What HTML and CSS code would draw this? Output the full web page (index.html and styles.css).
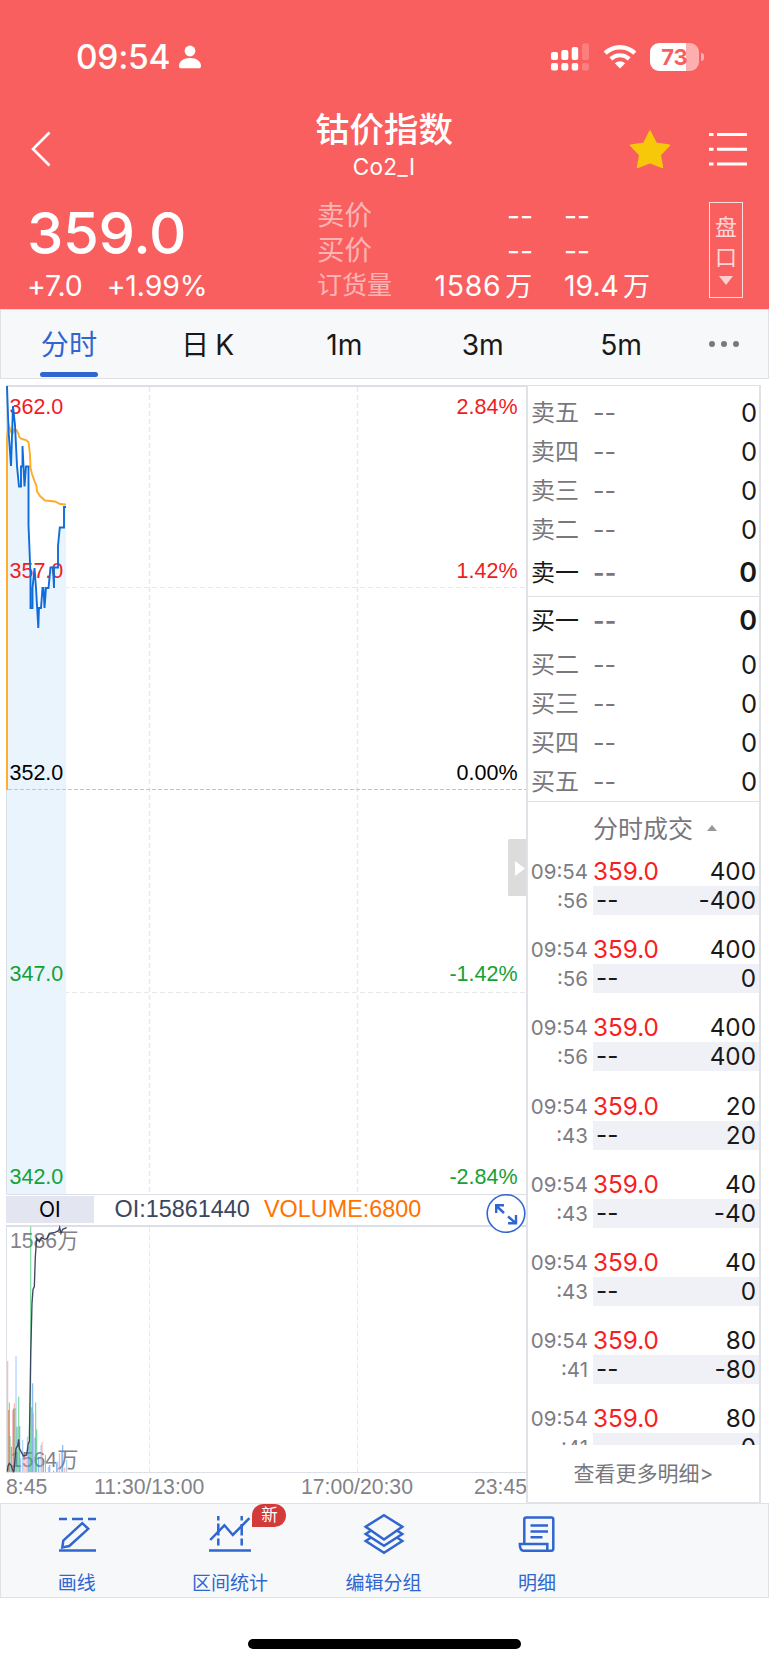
FILE: index.html
```html
<!DOCTYPE html>
<html lang="zh-CN">
<head>
  <meta charset="UTF-8">
  <meta name="viewport" content="width=device-width, initial-scale=1.0">
  <title>钴价指数 Co2_I</title>
  <link rel="stylesheet" href="styles.css">
</head>
<body>
  <header class="header">
    <div class="status-bar">
      <span class="time">09:54</span>
      <svg class="person" width="22" height="24" viewBox="0 0 22 24" fill="#fff">
        <circle cx="11" cy="6" r="5.4"/>
        <path d="M0 21c0-4.500 4.500-8 11-8s11 3.500 11 8c0 1.600-.8 2.300-2.200 2.300H2.200C.8 23.300 0 22.600 0 21z"/>
      </svg>
      <svg class="signal" width="38" height="28" viewBox="0 0 38 28" fill="#fff">
        <rect x="0" y="9" width="7" height="8" rx="2"/>
        <rect x="10.300" y="7" width="7" height="10" rx="2"/>
        <rect x="20.700" y="4" width="6.500" height="13" rx="2"/>
        <rect x="31" y="0.500" width="7" height="16.500" rx="2" opacity=".2"/>
        <rect x="0" y="20" width="7" height="7.500" rx="2"/>
        <rect x="10.300" y="20" width="7" height="7.500" rx="2"/>
        <rect x="20.700" y="20" width="6.500" height="7.500" rx="2"/>
        <rect x="31" y="20" width="7" height="7.500" rx="2" opacity=".2"/>
      </svg>
      <svg class="wifi" width="34" height="26" viewBox="0 0 34 26">
        <path d="M2.200 9.200C10.500 1.200 23.500 1.200 31.800 9.200" fill="none" stroke="#fff" stroke-width="4.400"/>
        <path d="M7.800 14.900C13 10 21 10 26.200 14.900" fill="none" stroke="#fff" stroke-width="4.200"/>
        <path d="M11.800 19.300C14.800 16.600 19.200 16.600 22.200 19.300L17 24.500z" fill="#fff"/>
      </svg>
      <div class="battery"><span>73</span></div>
    </div>

    <div class="nav">
      <svg class="back" width="20" height="36" viewBox="0 0 20 36">
        <path d="M18.500 1.500L2 18l16.500 16.500" fill="none" stroke="#fff" stroke-width="2.600"/>
      </svg>
      <div class="title">
        <h1>钴价指数</h1>
        <p>Co2_I</p>
      </div>
      <svg class="star" width="42" height="40" viewBox="0 0 42 40">
        <path d="M21 2l6.200 12.300 13.300 2-9.300 9.700 2.300 12.500L21 33.500 8.500 38.500 10.800 26 1.500 16.300l13.300-2z" fill="#f7c80a" stroke="#f7c80a" stroke-width="1.500" stroke-linejoin="round"/>
      </svg>
      <svg class="menu" width="38" height="34" viewBox="0 0 38 34" stroke="#fff" stroke-width="3">
        <path d="M0 2.500h4.500M8 2.500h30M0 17.200h4.500M8 17.200h30M0 31.900h4.500M8 31.900h30"/>
      </svg>
    </div>

    <div class="quote">
      <div class="last">
        <div class="price">359.0</div>
        <div class="change"><span>+7.0</span><span class="pct">+1.99%</span></div>
      </div>
      <div class="asks">
        <div class="line"><span class="label">卖价</span><span class="v1">--</span><span class="v2">--</span></div>
        <div class="line"><span class="label">买价</span><span class="v1">--</span><span class="v2">--</span></div>
        <div class="line"><span class="label small">订货量</span><span class="v1 wide">1586<i>万</i></span><span class="v2">19.4<i>万</i></span></div>
      </div>
      <div class="pankou"><span>盘</span><span>口</span><b class="down"></b></div>
    </div>
  </header>

  <nav class="tabs">
    <a class="tab active">分时</a>
    <a class="tab day">日 K</a>
    <a class="tab">1m</a>
    <a class="tab">3m</a>
    <a class="tab">5m</a>
    <a class="more"><i></i><i></i><i></i></a>
  </nav>

  <main class="main">
    <div class="chart">
      <svg width="528" height="1124" viewBox="0 379 528 1124">
        <!-- grid -->
        <g class="grid">
          <path d="M149.500 387V1194M357.500 387V1194" stroke-width="1.500"/>
          <path d="M149.500 1227V1472M357.500 1227V1472"/>
          <path d="M8 587.500H527M8 992.500H527"/>
        </g>
        <path class="fill" d="M7 386L11 466 13 406 17 466 19 486 21 486 21 466 28 466 28.500 525 31 608 34.500 568 38.500 628 41 608 44 588 48 588 50 567 58 567 60 527 64 527 64 507H66V1194H7z"/>
        <path class="zero" d="M8 789.500H527"/>
        <path class="frame thick" d="M6 386H527M6 1226H527"/>
        <path class="frame" d="M6.500 386V1194.500H527M6.500 1226V1472.500H527"/>

        <g class="axis up">
          <text x="9.500" y="414">362.0</text>
          <text x="9.500" y="578">357.0</text>
          <text class="end" x="517.500" y="414">2.84%</text>
          <text class="end" x="517.500" y="578">1.42%</text>
        </g>
        <g class="axis">
          <text x="9.500" y="779.500">352.0</text>
          <text class="end" x="517.500" y="779.500">0.00%</text>
        </g>
        <g class="axis down-text">
          <text x="9.500" y="981">347.0</text>
          <text x="9.500" y="1184">342.0</text>
          <text class="end" x="517.500" y="981">-1.42%</text>
          <text class="end" x="517.500" y="1184">-2.84%</text>
        </g>

        <path class="avg" d="M7 790V436L9 426 11 432 13 433 14 429.500 16.500 430 18.500 434 19.500 437.500 22 439 26 440 28.500 442 30 455 30.500 468 32 474 34.500 481 36.500 486 37 491.500 40 496 45 500.500 55 501.500 60 504 66 504.500"/>
        <path class="price-line" d="M7 386L8.500 430 11 466 13 406 15 425 17 466 19 486.500H21V466.500H22.500V446L24.500 486.500 26 466.500H28.500V525L30.500 575V608H32.500V588L34.500 568 36 588 38.300 628 39 608H41L42.500 588H43.500L44.500 608 46 588H48.500L50.500 567.500H53L54 588V567.500H58V546L59.800 527.500H64V507H66"/>

        <rect x="6" y="1196" width="88" height="27" fill="#e3e5f0"/>
        <text class="oi-tab" x="39" y="1216.500">OI</text>
        <text class="ind" x="114.500" y="1217" fill="#3b4660">OI:15861440</text>
        <text class="ind" x="264" y="1217" fill="#ff7200">VOLUME:6800</text>

        <g class="axis muted">
          <text x="10" y="1248">1586万</text>
          <text x="10" y="1467">1564万</text>
        </g>
        <!-- volume + open interest, in thirds of a pixel -->
        <g id="volume" transform="translate(0 1170) scale(.33333)">
        </g>
        <path class="oi-line" transform="translate(0 1170) scale(.33333)" d="M22 905L24 888 28 880 33 885 40 905 42 903 48 835 53 828 56 808 58 835 66 850 70 858 80 855 85 820 88 815 92 560 96 400 99 358 103 350 106 260 110 205 118 215 124 203 135 208 142 205 148 190 165 187 176 182 179 172 183 190 188 178 200 173"/>

        <g class="axis muted">
          <text x="6" y="1494">8:45</text>
          <text x="94" y="1494">11:30/13:00</text>
          <text x="301" y="1494">17:00/20:30</text>
          <text class="end" x="527" y="1494">23:45</text>
        </g>

        <g class="expand">
          <circle cx="506" cy="1213.500" r="18.800"/>
          <path d="M504 1213L496.500 1206M496.200 1213V1205.200H504M508 1216.500L515.500 1223M516 1215V1223.200H508"/>
        </g>
        <rect x="508" y="839" width="20" height="57" rx="1.500" fill="#dcdcdc"/>
        <path d="M515 861L525 868.500 515 876z" fill="#fff"/>
      </svg>
    </div>

    <aside class="panel">
      <div class="book">
        <div class="row"><span>卖五</span><em>--</em><b>0</b></div>
        <div class="row"><span>卖四</span><em>--</em><b>0</b></div>
        <div class="row"><span>卖三</span><em>--</em><b>0</b></div>
        <div class="row"><span>卖二</span><em>--</em><b>0</b></div>
        <div class="row first ask"><span>卖一</span><em>--</em><b>0</b></div>
        <div class="row first bid"><span>买一</span><em>--</em><b>0</b></div>
        <div class="row"><span>买二</span><em>--</em><b>0</b></div>
        <div class="row"><span>买三</span><em>--</em><b>0</b></div>
        <div class="row"><span>买四</span><em>--</em><b>0</b></div>
        <div class="row"><span>买五</span><em>--</em><b>0</b></div>
      </div>
      <div class="trades-title">分时成交<i class="up-arrow"></i></div>
      <div class="trades" id="trades"></div>
      <a class="more-link">查看更多明细&gt;</a>
    </aside>
  </main>

  <footer class="toolbar">
    <div class="tool">
      <svg width="48" height="42" viewBox="0 0 48 42">
        <path d="M6 6h8M19 6h11M35 6h8M6 37.600h37"/>
        <path d="M9.300 34.500L10.300 27.500 29.300 10.200 35.200 15.800 16.300 33z"/>
      </svg>
      <span>画线</span>
    </div>
    <div class="tool">
      <svg width="48" height="42" viewBox="0 0 48 42">
        <path d="M3 37.500h42M4.200 27L18.400 12.300 26.800 22 43.400 5.200"/>
        <path d="M12.300 3v4.500M12.300 10.500v12M12.300 25.500v7M35.700 3v4.500M35.700 11v11.500M35.700 25.500v7"/>
      </svg>
      <span>区间统计</span>
      <i class="new">新</i>
    </div>
    <div class="tool">
      <svg width="48" height="42" viewBox="0 0 48 42">
        <path d="M24 2.300L42.300 13.700 24 26.500 5.700 13.700z"/>
        <path d="M11.500 17.300L5.700 21 24 32.800 42.300 21 36.500 17.300M11.500 24.300L5.700 28 24 39.800 42.300 28 36.500 24.300" />
      </svg>
      <span>编辑分组</span>
    </div>
    <div class="tool">
      <svg width="48" height="42" viewBox="0 0 48 42">
        <path d="M11.300 31V6.500Q11.300 4.500 13.300 4.500H38.300Q40.300 4.500 40.300 6.500V35.500Q40.300 37.700 38.300 37.700H10.500Q6.800 37.700 6.800 31H34.300V37"/>
        <path d="M17.500 12.500H35M17.500 18.500H35M17.500 24.300H29.500"/>
      </svg>
      <span>明细</span>
    </div>
    <div class="tool"></div>
  </footer>
  <div class="home-bar"></div>

  <script>
    const trades = [
      { sec: 56, vol: 400, diff: -400 },
      { sec: 56, vol: 400, diff: 0 },
      { sec: 56, vol: 400, diff: 400 },
      { sec: 43, vol: 20, diff: 20 },
      { sec: 43, vol: 40, diff: -40 },
      { sec: 43, vol: 40, diff: 0 },
      { sec: 41, vol: 80, diff: -80 },
      { sec: 41, vol: 80, diff: 0 }
    ];

    document.getElementById('trades').innerHTML = trades.map(t => `
      <div class="trade">
        <div class="at"><span>09:54</span><span>:${t.sec}</span></div>
        <div class="deal">
          <div class="top"><span>359.0</span><b>${t.vol}</b></div>
          <div class="bottom"><span>--</span><b>${t.diff}</b></div>
        </div>
      </div>`).join('');

    // [x, top, color]
    const green = '#35c46a', pink = '#ff8a8a', blue = '#3a8bf0', light = '#7fb4f8';
    const bars = [
      [23, 573, pink], [26, 720, '#e0623e'], [28, 698, green], [30, 798, green], [34, 830, blue],
      [38, 720, pink], [41, 716, '#5a6a90'], [43, 700, pink], [45, 714, green], [48, 559, light],
      [51, 770, '#1f9d80'], [56, 680, green], [59, 768, blue], [62, 865, light], [68, 810, light],
      [72, 850, pink], [78, 850, pink], [82, 800, light], [86, 830, blue], [89, 790, green],
      [92, 170, green], [95, 712, green], [98, 640, blue], [100, 730, pink], [105, 803, blue],
      [107, 697, green], [110, 778, green], [116, 860, blue], [123, 825, light], [126, 816, pink],
      [130, 870, blue], [136, 855, green], [145, 890, light], [149, 885, blue], [161, 902, blue],
      [170, 880, blue], [173, 875, light], [178, 850, pink], [184, 845, pink], [188, 825, blue],
      [194, 893, pink], [200, 870, light]
    ];
    document.getElementById('volume').innerHTML = bars.map(([x, top, color]) =>
      `<rect x="${x - 1.5}" y="${top}" width="3.200" height="${906 - top}" fill="${color}" opacity=".7"/>`).join('');
  </script>
</body>
</html>
```
FILE: styles.css
```css
:root {
  --red: #fa5f5f;
  --blue: #3066d0;
  --bar: #f7f8fa;
  --border: #dfe1e6;
  --text: #191919;
  --muted: #77777d;
}

* {
  box-sizing: border-box;
}

body {
  margin: 0;
  width: 769px;
  height: 1665px;
  overflow: hidden;
  background: #fff;
  color: var(--text);
  font-family: Inter, "Noto Sans CJK SC", sans-serif;
}

i, em {
  font-style: normal;
}

svg {
  display: block;
  flex: none;
}

.header {
  height: 309px;
  background: var(--red);
  color: #fff;
}

/* status bar */
.status-bar {
  display: flex;
  align-items: center;
  height: 114px;
  padding-left: 76px;
}

.time {
  width: 103px;
  font-size: 33.5px;
  font-weight: 550;
  letter-spacing: -0.3px;
}

.signal {
  margin-left: 350px;
}

.wifi {
  margin-left: 14px;
}

.battery {
  position: relative;
  width: 49px;
  height: 28px;
  margin-left: 13px;
  border-radius: 9px;
  background: linear-gradient(to right, #fff 36px, #fdafaf 36px);
  color: var(--red);
  font-size: 22px;
  font-weight: 700;
  line-height: 28px;
  text-align: center;
}

.battery::after {
  content: "";
  position: absolute;
  right: -5px;
  top: 10px;
  width: 3px;
  height: 8px;
  border-radius: 0 4px 4px 0;
  background: #fdafaf;
}

/* title row */
.nav {
  display: flex;
  align-items: center;
  height: 69px;
  padding-left: 31px;
}

.title {
  width: 200px;
  margin-left: 233px;
  text-align: center;
}

.title h1 {
  margin: 0;
  font-size: 34.5px;
  font-weight: 500;
  line-height: 25px;
}

.title p {
  margin: 11px 0 0;
  font-size: 22.5px;
  line-height: 28px;
  letter-spacing: 0.4px;
}

.star {
  margin-left: 145px;
}

.menu {
  margin-left: 38px;
}

/* quote */
.quote {
  display: flex;
  height: 126px;
  padding-top: 15px;
}

.last {
  width: 317px;
  padding-left: 27px;
}

.price {
  height: 69px;
  font-size: 58px;
  font-weight: 450;
  line-height: 71px;
  letter-spacing: -0.3px;
}

.change {
  display: flex;
  font-size: 28.4px;
  line-height: 38px;
  letter-spacing: -0.1px;
}

.pct {
  margin-left: 24px;
}

.asks {
  width: 392px;
}

.line {
  display: flex;
  align-items: center;
  height: 35px;
  font-size: 28.4px;
  line-height: 31px;
}

.label {
  width: 76px;
  font-size: 27.5px;
  color: rgba(255, 255, 255, 0.55);
}

.label.small {
  padding-bottom: 1px;
  font-size: 25px;
}

.v1 {
  width: 140px;
  text-align: right;
}

.v1.wide {
  letter-spacing: 0.7px;
}

.v2 {
  margin-left: 31px;
}

.line i {
  margin-left: 4px;
  font-size: 27px;
}

.pankou {
  display: flex;
  flex-direction: column;
  align-items: center;
  width: 34px;
  height: 96px;
  margin-top: 4px;
  padding-top: 9px;
  border: 1px solid rgba(255, 255, 255, 0.8);
  color: rgba(255, 255, 255, 0.75);
  font-size: 22px;
  line-height: 30px;
}

.down {
  margin-top: 4px;
  border: 7px solid transparent;
  border-top: 9px solid rgba(255, 255, 255, 0.7);
  border-bottom: 0;
}

/* period tabs */
.tabs {
  display: flex;
  height: 70px;
  background: var(--bar);
  border: 1px solid var(--border);
}

.tab {
  position: relative;
  width: 138.3px;
  font-size: 28.2px;
  line-height: 70px;
  text-align: center;
}

.tab:first-child {
  width: 136px;
}

.tab.day {
  padding-left: 3px;
  word-spacing: -2px;
}

.tab.active {
  color: var(--blue);
}

.tab.active::after {
  content: "";
  position: absolute;
  left: 39px;
  bottom: 1px;
  width: 58px;
  height: 5px;
  border-radius: 3px;
  background: var(--blue);
}

.more {
  display: flex;
  align-items: center;
  gap: 6px;
  margin-left: 19px;
}

.more i {
  width: 6px;
  height: 6px;
  border-radius: 50%;
  background: #77777d;
}

.main {
  display: flex;
  height: 1124px;
}

/* chart */
.chart {
  width: 526px;
}

.chart text {
  font-family: "Liberation Sans", "Noto Sans CJK SC", sans-serif;
}

.grid path {
  fill: none;
  stroke: #e9e9eb;
  stroke-dasharray: 5 3;
}

.zero {
  stroke: #c4c4c8;
  stroke-dasharray: 4 2;
}

.fill {
  fill: #e9f4fd;
}

.frame {
  fill: none;
  stroke: #dddfe6;
}

.frame.thick {
  stroke-width: 2;
}

.axis text {
  font-size: 21.5px;
}

.axis.up {
  fill: #f01c24;
}

.axis.down-text {
  fill: #14a136;
}

.axis.muted {
  fill: #828288;
}

.axis.muted text {
  font-size: 21.2px;
}

.chart .end {
  text-anchor: end;
}

.avg, .price-line, .oi-line {
  fill: none;
  stroke-width: 1.9;
}

.avg {
  stroke: #ffab24;
}

.price-line {
  stroke: #0f6ddb;
}

.oi-line {
  stroke: #3b4660;
  stroke-width: 4;
}

.chart .oi-tab {
  font-family: Inter, sans-serif;
  font-size: 21px;
}

.chart .ind {
  font-size: 23.4px;
}

.expand circle {
  fill: #fff;
  stroke: var(--blue);
  stroke-width: 1.6;
}

.expand path {
  fill: none;
  stroke: var(--blue);
  stroke-width: 2.4;
}

/* order book + trades */
.panel {
  display: flex;
  flex-direction: column;
  width: 235px;
  height: 1118px;
  margin-top: 6px;
  background: #fff;
  border: solid #e1e1e8;
  border-width: 1px 2px;
}

.book {
  padding-top: 7px;
  border-bottom: 1px solid var(--border);
}

.row {
  display: flex;
  align-items: center;
  height: 39px;
  padding: 0 2px 0 3px;
  font-size: 24px;
  line-height: 34px;
}

.row span, .row em {
  color: var(--muted);
}

.row em {
  margin-left: 14px;
  font-size: 25px;
}

.row b {
  margin-left: auto;
  font-size: 25.5px;
  font-weight: 400;
}

.row.first {
  height: 48px;
}

.row.first span {
  color: var(--text);
}

.row.first em {
  font-weight: 600;
}

.row.first b {
  font-size: 27px;
  font-weight: 600;
}

.row.ask {
  border-bottom: 1px solid var(--border);
}

.trades-title {
  display: flex;
  align-items: center;
  height: 55px;
  padding: 0 0 5px 65px;
  color: var(--muted);
  font-size: 25px;
}

.up-arrow {
  margin: 2px 0 0 14px;
  border: 5.500px solid transparent;
  border-bottom: 6px solid #98989c;
  border-top: 0;
}

.trades {
  height: 588px;
  overflow: hidden;
}

.trade {
  display: flex;
  height: 78.2px;
}

.at {
  display: flex;
  flex-direction: column;
  width: 65px;
  padding-right: 5px;
  color: #7c7c84;
  font-size: 20.5px;
  line-height: 29px;
  text-align: right;
}

.deal {
  flex: 1;
  font-size: 24.3px;
  line-height: 29px;
}

.top, .bottom {
  display: flex;
  justify-content: space-between;
  height: 29px;
  padding-right: 3px;
}

.top span {
  color: #f8201f;
}

.bottom {
  padding-left: 3px;
  background: #f0f1f7;
}

.deal b {
  font-weight: 400;
}

.bottom b {
  font-feature-settings: "calt" 0;
}

.more-link {
  margin-top: 15px;
  color: var(--muted);
  font-size: 21px;
  line-height: 28px;
  text-align: center;
}

/* bottom toolbar */
.toolbar {
  display: flex;
  height: 95px;
  background: var(--bar);
  border: 1px solid var(--border);
}

.tool {
  position: relative;
  left: -1px;
  display: flex;
  flex: 1;
  flex-direction: column;
  align-items: center;
  padding-top: 9px;
  color: var(--blue);
  font-size: 19px;
}

.tool svg {
  fill: none;
  stroke: var(--blue);
  stroke-width: 2.5;
}

.tool span {
  margin-top: 15px;
  line-height: 28px;
}

.new {
  position: absolute;
  left: 99px;
  top: 0;
  width: 34px;
  height: 23px;
  border-radius: 12px 12px 12px 0;
  background: #d33b3b;
  color: #fff;
  font-size: 16.5px;
  line-height: 23px;
  text-align: center;
}

.home-bar {
  width: 273px;
  height: 10px;
  margin: 41px auto 0;
  border-radius: 5px;
  background: #000;
}
```
